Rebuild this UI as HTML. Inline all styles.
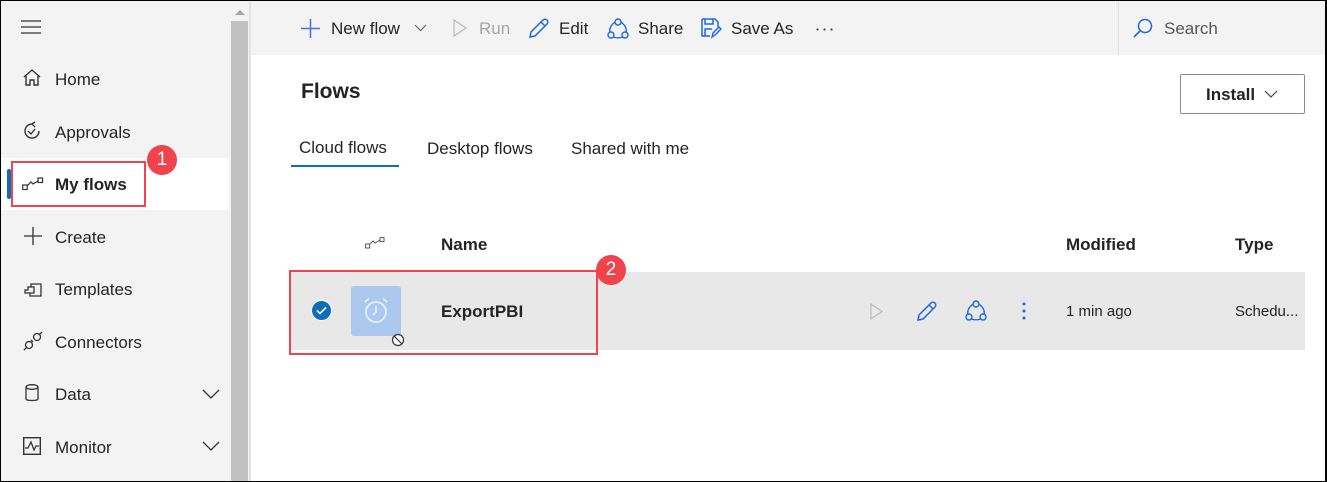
<!DOCTYPE html>
<html><head><meta charset="utf-8"><style>
*{margin:0;padding:0;box-sizing:border-box}
body{width:1327px;height:482px;overflow:hidden;font-family:"Liberation Sans",sans-serif;background:#fff;position:relative;color:#242424}
.a{position:absolute}
.t{position:absolute;font-size:17px;white-space:nowrap}
svg{position:absolute;overflow:visible}
</style></head><body>
<div class="a" style="left:0;top:0;width:231px;height:482px;background:#f3f3f3"></div>
<div class="a" style="left:231px;top:0;width:18px;height:482px;background:#f3f3f3"></div>
<div class="a" style="left:231px;top:21px;width:17px;height:461px;background:#c1c1c1"></div>
<svg style="left:234px;top:9px" width="12" height="8"><path d="M1 6L6 1L11 6Z" fill="#a3a3a3"/></svg>
<div class="a" style="left:249px;top:0;width:2px;height:482px;background:#e1e1e1"></div>
<div class="a" style="left:251px;top:0;width:1076px;height:55px;background:#f3f3f3"></div>
<div class="a" style="left:1118px;top:0;width:1px;height:55px;background:#e0e0e0"></div>

<!-- sidebar -->
<svg style="left:21px;top:20px" width="20" height="14"><path d="M0 1H20M0 7H20M0 13H20" stroke="#333" stroke-width="1.2"/></svg>
<svg style="left:23px;top:69px" width="18" height="18"><path d="M1 8L9 1L17 8M3 7V16H7V11H11V16H15V7" fill="none" stroke="#333" stroke-width="1.4"/></svg>
<div class="t" style="left:55px;top:70px">Home</div>
<svg style="left:23px;top:122px" width="18" height="18"><path d="M9 2A7 7 0 1 0 16 9M9 2L12 0M9 2L12 5M5 9L8 12L12 7" fill="none" stroke="#333" stroke-width="1.4"/></svg>
<div class="t" style="left:55px;top:123px">Approvals</div>
<div class="a" style="left:0;top:158px;width:229px;height:52px;background:#fff;border-radius:3px"></div>
<div class="a" style="left:7px;top:169px;width:4px;height:30px;background:#0f6cbd;border-radius:2px"></div>
<svg style="left:22px;top:177px" width="22" height="14"><rect x="0.7" y="8" width="4.5" height="4.5" fill="none" stroke="#333" stroke-width="1.2"/><rect x="16" y="1" width="4.5" height="4.5" fill="none" stroke="#333" stroke-width="1.2"/><path d="M5 9L9 5L11 7L16 4" fill="none" stroke="#333" stroke-width="1.2"/></svg>
<div class="t" style="left:55px;top:175px;font-weight:bold">My flows</div>
<div class="a" style="left:11px;top:161px;width:135px;height:46px;border:2.5px solid #f0434b"></div>
<div class="a" style="left:147px;top:145px;width:30px;height:30px;border-radius:50%;background:#f0434b;color:#fff;font-size:19px;text-align:center;line-height:30px">1</div>
<svg style="left:24px;top:227px" width="18" height="18"><path d="M9 0V18M0 9H18" stroke="#333" stroke-width="1.3"/></svg>
<div class="t" style="left:55px;top:228px">Create</div>
<svg style="left:24px;top:280px" width="18" height="18"><path d="M1 10H4V7H7V4H17V16H6V13H1Z M7 7H10V13H6" fill="none" stroke="#333" stroke-width="1.3"/></svg>
<div class="t" style="left:55px;top:280px">Templates</div>
<svg style="left:23px;top:331px" width="20" height="20"><circle cx="6" cy="14" r="3.5" fill="none" stroke="#333" stroke-width="1.3"/><circle cx="14" cy="6" r="3.5" fill="none" stroke="#333" stroke-width="1.3"/><path d="M1 19L4 16M16 4L19 1M8 9L10 11" stroke="#333" stroke-width="1.3"/></svg>
<div class="t" style="left:55px;top:333px">Connectors</div>
<svg style="left:25px;top:384px" width="14" height="18"><ellipse cx="7" cy="3" rx="6" ry="2.3" fill="none" stroke="#333" stroke-width="1.3"/><path d="M1 3V15C1 17 13 17 13 15V3" fill="none" stroke="#333" stroke-width="1.3"/></svg>
<div class="t" style="left:55px;top:385px">Data</div>
<svg style="left:202px;top:389px" width="18" height="10"><path d="M1 1L9 9L17 1" fill="none" stroke="#333" stroke-width="1.3"/></svg>
<svg style="left:23px;top:437px" width="18" height="18"><rect x="0.7" y="0.7" width="16.6" height="16.6" fill="none" stroke="#333" stroke-width="1.4"/><path d="M2 11L5 11L8 5L11 13L13 9H16" fill="none" stroke="#333" stroke-width="1.3"/></svg>
<div class="t" style="left:55px;top:438px">Monitor</div>
<svg style="left:202px;top:441px" width="18" height="10"><path d="M1 1L9 9L17 1" fill="none" stroke="#333" stroke-width="1.3"/></svg>

<!-- toolbar -->
<svg style="left:301px;top:19px" width="19" height="19"><path d="M9.5 0V19M0 9.5H19" stroke="#4f6bed" stroke-width="1.5"/></svg>
<div class="t" style="left:331px;top:19px">New flow</div>
<svg style="left:414px;top:24px" width="13" height="8"><path d="M1 1L6.5 6.5L12 1" fill="none" stroke="#666" stroke-width="1.2"/></svg>
<svg style="left:453px;top:19px" width="14" height="18"><path d="M1 1L13 9L1 17Z" fill="none" stroke="#bbb" stroke-width="1.3"/></svg>
<div class="t" style="left:479px;top:19px;color:#a6a6a6">Run</div>
<svg style="left:528px;top:18px" width="21" height="21"><path d="M2 19L3 14L15 2C16 1 18 1 19 2C20 3 20 5 19 6L7 18Z M13 4L17 8" fill="none" stroke="#2266e3" stroke-width="1.5"/></svg>
<div class="t" style="left:559px;top:19px">Edit</div>
<svg style="left:607px;top:18px" width="22" height="22"><path d="M8 4C4 7 2 11 3 14M14 4C18 7 20 11 19 14M6 19C9 20 13 20 16 19" fill="none" stroke="#2266e3" stroke-width="1.4"/><circle cx="11" cy="4" r="3" fill="#f3f3f3" stroke="#2266e3" stroke-width="1.4"/><circle cx="4" cy="17" r="3" fill="#f3f3f3" stroke="#2266e3" stroke-width="1.4"/><circle cx="18" cy="17" r="3" fill="#f3f3f3" stroke="#2266e3" stroke-width="1.4"/></svg>
<div class="t" style="left:638px;top:19px">Share</div>
<svg style="left:701px;top:18px" width="22" height="21"><path d="M1 1H14L17 4V9M1 1V18H9M4 1V6H12V1M4 18V11H11" fill="none" stroke="#2266e3" stroke-width="1.5"/><path d="M11 19L12 15L18 9L20 11L14 17Z" fill="none" stroke="#2266e3" stroke-width="1.4"/></svg>
<div class="t" style="left:731px;top:19px">Save As</div>
<svg style="left:816px;top:28px" width="18" height="3"><circle cx="1.5" cy="1.5" r="1.1" fill="#444"/><circle cx="8.5" cy="1.5" r="1.1" fill="#444"/><circle cx="15.5" cy="1.5" r="1.1" fill="#444"/></svg>
<svg style="left:1133px;top:18px" width="20" height="20"><circle cx="12" cy="8" r="6.5" fill="none" stroke="#2266e3" stroke-width="1.5"/><path d="M7 13L1 19" stroke="#2266e3" stroke-width="1.6"/></svg>
<div class="t" style="left:1164px;top:19px;color:#555">Search</div>

<!-- content -->
<div class="t" style="left:301px;top:80px;font-size:21px;font-weight:bold;color:#242424">Flows</div>
<div class="a" style="left:1180px;top:74px;width:125px;height:40px;border:1px solid #8a8a8a;border-radius:2px"></div>
<div class="t" style="left:1206px;top:85px;font-weight:bold">Install</div>
<svg style="left:1264px;top:90px" width="14" height="8"><path d="M1 1L7 7L13 1" fill="none" stroke="#444" stroke-width="1.2"/></svg>
<div class="t" style="left:299px;top:138px">Cloud flows</div>
<div class="a" style="left:291px;top:165px;width:108px;height:2px;background:#0f6cbd"></div>
<div class="t" style="left:427px;top:139px">Desktop flows</div>
<div class="t" style="left:571px;top:139px">Shared with me</div>

<svg style="left:365px;top:237px" width="20" height="12"><rect x="0.6" y="7" width="4" height="4" fill="none" stroke="#555" stroke-width="1"/><rect x="15" y="0.6" width="4" height="4" fill="none" stroke="#555" stroke-width="1"/><path d="M4.5 7.5L8 4L10 6L15 3" fill="none" stroke="#555" stroke-width="1"/></svg>
<div class="t" style="left:441px;top:235px;font-weight:bold">Name</div>
<div class="t" style="left:1066px;top:235px;font-weight:bold">Modified</div>
<div class="t" style="left:1235px;top:235px;font-weight:bold">Type</div>

<div class="a" style="left:290px;top:272px;width:1015px;height:78px;background:#e8e8e8"></div>
<div class="a" style="left:311px;top:300px;width:21px;height:21px;border-radius:50%;background:#0f6cbd;border:1.5px solid #fff"></div>
<svg style="left:316px;top:306px" width="11" height="9"><path d="M1 4.5L4 7.5L10 1.5" fill="none" stroke="#fff" stroke-width="1.6"/></svg>
<div class="a" style="left:351px;top:286px;width:50px;height:50px;background:#acc8ee;border-radius:3px"></div>
<svg style="left:363px;top:297px" width="26" height="28"><circle cx="13" cy="15" r="10" fill="none" stroke="#e6eefa" stroke-width="1.8"/><path d="M13 9V15L10 18M2 5L6 1.5M24 5L20 1.5" fill="none" stroke="#e6eefa" stroke-width="1.8"/></svg>
<svg style="left:391px;top:333px" width="14" height="14"><circle cx="7" cy="7" r="5.5" fill="#fff" stroke="#333" stroke-width="1.2"/><path d="M3 3L11 11" stroke="#333" stroke-width="1.2"/></svg>
<div class="t" style="left:441px;top:302px;font-weight:bold">ExportPBI</div>
<svg style="left:870px;top:303px" width="13" height="17"><path d="M1 1L12 8.5L1 16Z" fill="none" stroke="#bbb" stroke-width="1.2"/></svg>
<svg style="left:916px;top:301px" width="21" height="21"><path d="M2 19L3 14L15 2C16 1 18 1 19 2C20 3 20 5 19 6L7 18Z M13 4L17 8" fill="none" stroke="#2266e3" stroke-width="1.5"/></svg>
<svg style="left:965px;top:300px" width="22" height="22"><path d="M8 4C4 7 2 11 3 14M14 4C18 7 20 11 19 14M6 19C9 20 13 20 16 19" fill="none" stroke="#2266e3" stroke-width="1.4"/><circle cx="11" cy="4" r="3" fill="#e8e8e8" stroke="#2266e3" stroke-width="1.4"/><circle cx="4" cy="17" r="3" fill="#e8e8e8" stroke="#2266e3" stroke-width="1.4"/><circle cx="18" cy="17" r="3" fill="#e8e8e8" stroke="#2266e3" stroke-width="1.4"/></svg>
<svg style="left:1022px;top:302px" width="4" height="18"><circle cx="2" cy="2" r="1.5" fill="#2266e3"/><circle cx="2" cy="9" r="1.5" fill="#2266e3"/><circle cx="2" cy="16" r="1.5" fill="#2266e3"/></svg>
<div class="t" style="left:1066px;top:303px;font-size:15px">1 min ago</div>
<div class="t" style="left:1235px;top:303px;font-size:15px">Schedu...</div>

<div class="a" style="left:289px;top:270px;width:309px;height:85px;border:2.5px solid #f0434b"></div>
<div class="a" style="left:596px;top:255px;width:30px;height:30px;border-radius:50%;background:#f0434b;color:#fff;font-size:19px;text-align:center;line-height:30px">2</div>

<div class="a" style="left:0;top:0;width:1327px;height:482px;border:1px solid #000;border-right-width:2px"></div>
</body></html>
